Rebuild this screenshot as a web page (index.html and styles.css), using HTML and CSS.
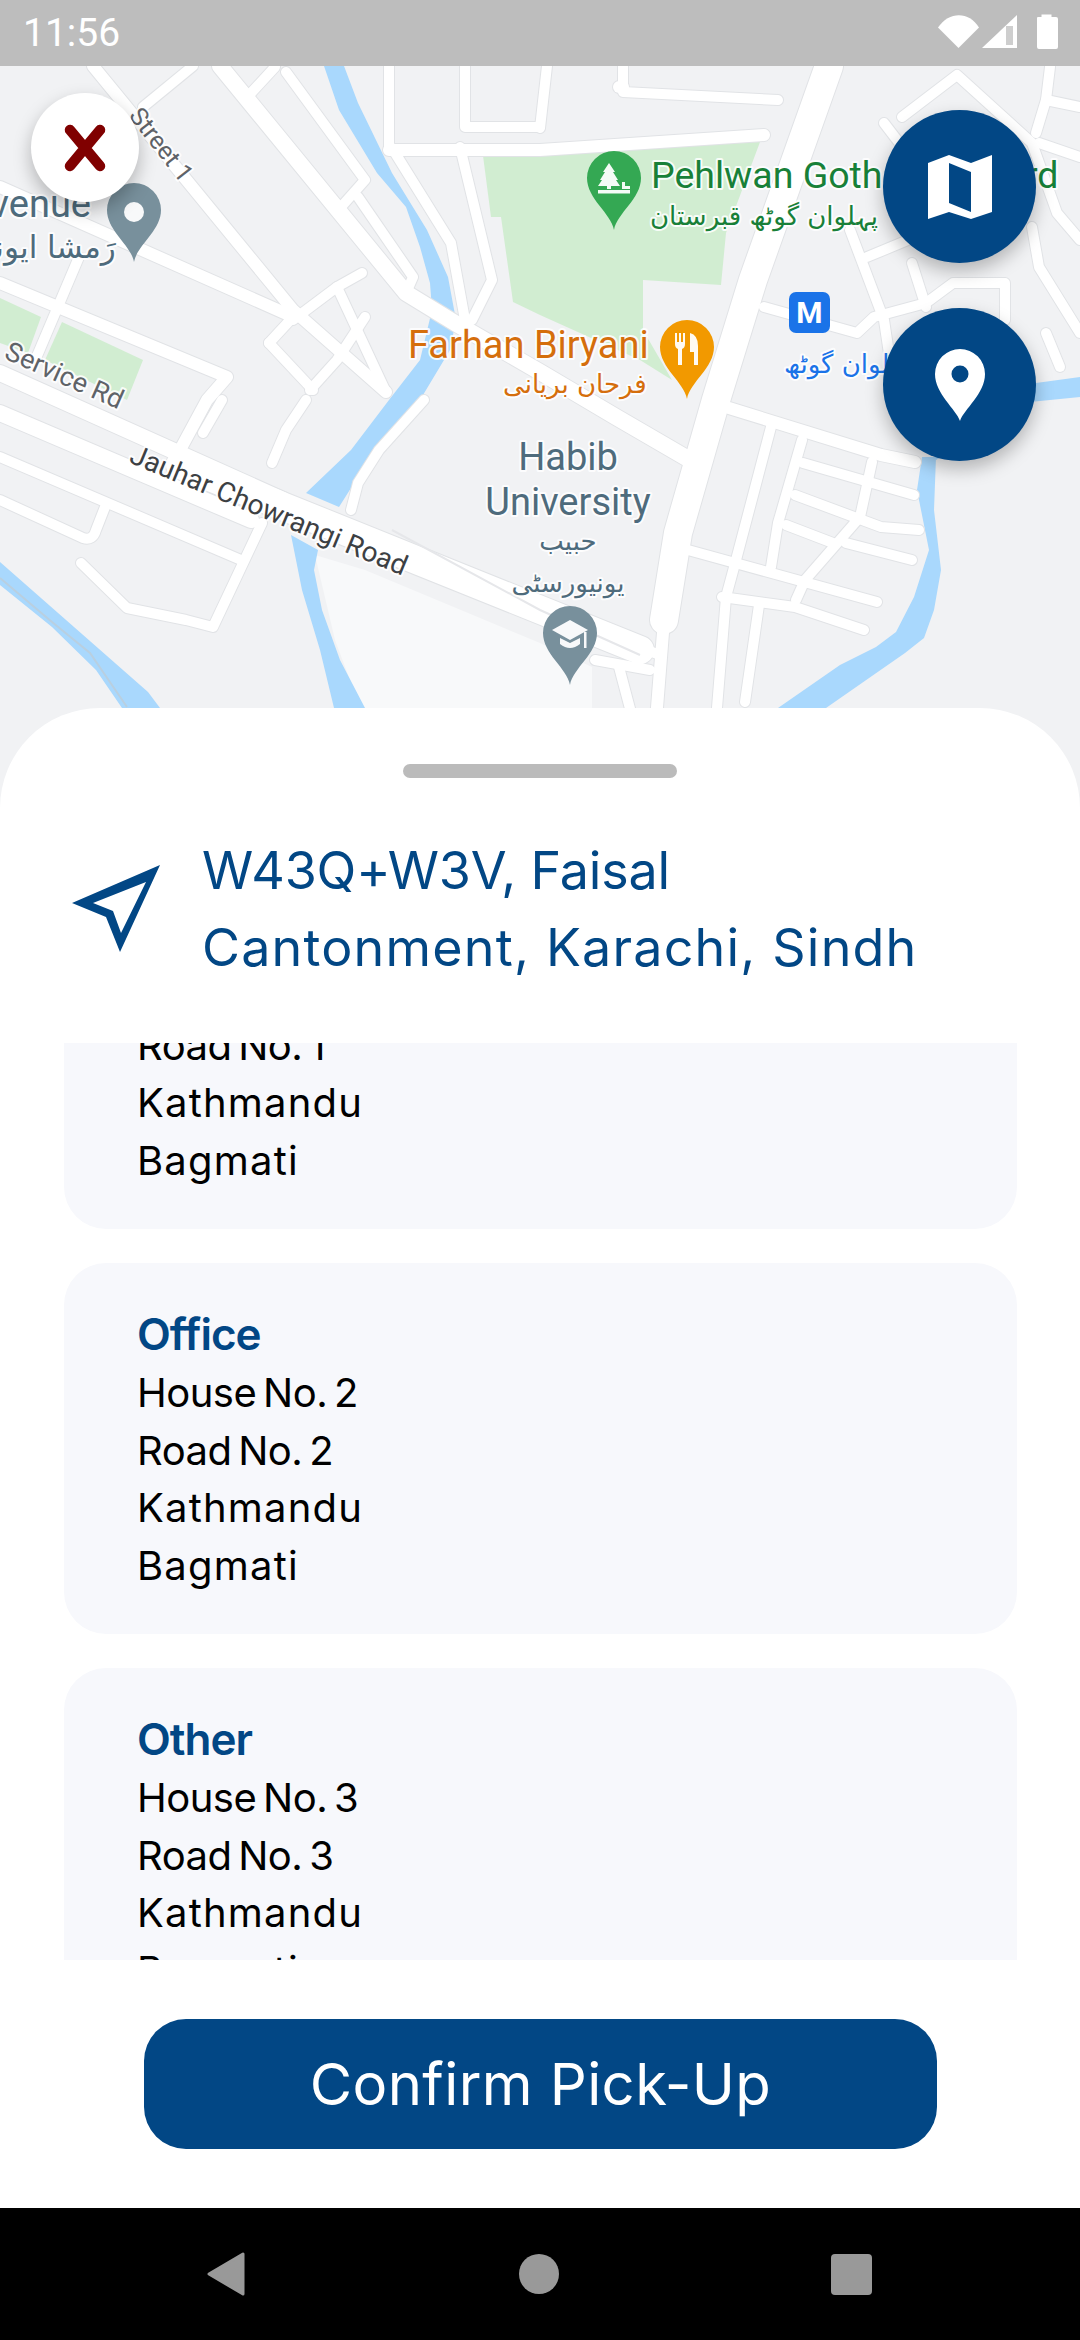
FILE: index.html
```html
<!DOCTYPE html>
<html lang="en">
<head>
<meta charset="utf-8">
<title>Confirm Pick-Up</title>
<link rel="stylesheet" href="styles.css">
</head>
<body>
<div class="screen">
  <header class="status">
    <span class="time">11:56</span>
    <svg class="status-icons" viewBox="0 0 122 36" width="122" height="36">
      <path class="w" d="M0 13.5 C11 -3 31 -3 41 13.5 L20.5 34 Z"/>
      <path class="w" d="M44 34 L79 1 V34 Z"/>
      <path class="s" d="M68 12 H75 V31 H68 Z"/>
      <path class="w" d="M99 4 Q99 3 100 3 H103.500 V0.500 H113.500 V3 H118 Q120 3 120 5 V33 Q120 35 118 35 H101 Q99 35 99 33 Z"/>
    </svg>
  </header>

  <section class="map">
    <svg class="map-canvas" viewBox="0 66 1080 760" width="1080" height="760" aria-label="Map">
      <defs>
        <g id="r-s">
          <path d="M143 107 L193 66"/><path d="M275 67 L251 93"/><path d="M341 207 L365 180 L286 72"/>
          <path d="M358 197 L413 277 L406 293"/><path d="M392 148 L451 243 L465 320"/>
          <path d="M460 147 L492 280 L472 320"/><path d="M389 66 L389 147"/>
          <path d="M465 66 V127 H540"/><path d="M547 66 L540 128"/>
          <path d="M623 66 V92 L778 100"/><path d="M79 257 L34 363"/>
          <path d="M293 320 L337 287 L362 273"/><path d="M337 287 L386 392"/>
          <path d="M365 317 L337 360 L310 390"/><path d="M269 343 L313 390"/><path d="M269 343 L293 317"/>
          <path d="M306 400 L286 430 L272 463"/><path d="M222 400 L203 433"/>
          <path d="M424 400 L379 450 L358 483 L351 510"/>
          <path d="M0 500 L83 538 Q93 541 96 530 L105 507"/><path d="M0 457 L241 560"/>
          <path d="M262 523 L213 627 L186 620 L127 608 L81 563"/>
          <path d="M771 427 L736 560 L726 597 L716 720"/><path d="M802 440 L778 523 L771 567"/>
          <path d="M803 463 L914 495"/><path d="M795 495 L881 527 L919 530"/>
          <path d="M786 525 L833 543"/><path d="M846 543 L912 560"/>
          <path d="M872 462 L860 517 L805 580 L796 600"/><path d="M688 550 L877 602"/>
          <path d="M722 597 L795 607 L864 630"/><path d="M759 605 L745 702"/>
          <path d="M902 117 L957 75 L1032 143 L1057 213 L1080 240"/><path d="M884 123 L920 170"/>
          <path d="M850 230 L884 320 L891 367"/><path d="M867 257 L920 235"/><path d="M912 263 L926 307"/>
          <path d="M764 307 L857 333 L874 317 L926 303 L953 283 H1005 V320"/>
          <path d="M1046 333 L1060 367"/><path d="M1050 67 L1046 100 L1080 107"/><path d="M1036 133 L1046 100"/>
          <path d="M1039 143 L1080 157"/><path d="M1032 227 L1039 267 L1080 333"/>
          <path d="M619 667 L633 720"/><path d="M540 603 L620 640 L660 655"/>
          <path d="M595 660 L650 670"/>
        </g>
        <g id="r-m">
          <path d="M93 66 L293 310 L386 392"/><path d="M0 187 L289 315"/>
          <path d="M0 283 L227 377 L207 400 L180 450"/>
          <path d="M389 150 H540 L764 135"/><path d="M729 408 L881 455 L915 462"/>
          <path d="M619 87 H623"/><path d="M664 620 L656 720"/>
        </g>
        <g id="r-l">
          <path d="M220 66 L406 293 L455 323 L540 372 L616 417 L690 460"/>
          <path d="M0 373 L283 500"/><path d="M0 413 L251 520"/>
        </g>
        <g id="r-xl">
          <path d="M829 66 L753 280 L716 400 L678 533 L664 620"/>
          <path d="M180 465 L640 650"/>
        </g>
        <path id="pin" d="M0 79 C-3 62 -27 48 -27 27 A27 27 0 1 1 27 27 C27 48 3 62 0 79 Z"/>
      </defs>

      <rect class="land" x="0" y="66" width="1080" height="760"/>
      <path class="campus" d="M315 555 L365 570 L540 643 L592 667 V720 H365 L335 640 Z"/>
      <path class="park" d="M482 148 L760 142 L726 233 L721 285 L643 280 V330 L672 380 L640 360 L540 315 L513 302 L501 217 L491 217 Z"/>
      <path class="park" d="M0 298 L41 317 L28 353 L0 343 Z"/>
      <path class="park" d="M62 322 L143 360 L127 400 L45 360 Z"/>

      <path class="water" d="M324 66 L344 66 L358 103 L392 173 L427 230 L448 277 L456 320 L450 350 L420 400 L384 450 L351 488 L339 507 L306 493 L351 450 L389 400 L420 360 L432 310 L430 283 L420 247 L406 207 L377 173 L339 110 Z"/>
      <path class="water" d="M291 535 L318 550 L314 570 L322 610 L340 660 L365 708 L334 708 L320 650 L302 590 Z"/>
      <path class="water" d="M0 562 L148 692 L160 708 L122 708 L96 670 L52 627 L0 585 Z"/>
      <path class="water" d="M922 457 L936 457 L934 510 L941 570 L934 610 L924 638 L905 653 L826 708 L778 708 L840 665 L876 647 L896 632 L914 597 L929 550 L917 490 Z"/>
      <path class="water" d="M930 440 L1036 383 L1080 377 V397 L1030 402 L936 460 Z"/>
      <path class="stream" d="M0 578 L52 622 L90 653 L127 707"/>

      <use href="#r-s" class="case c-s"/><use href="#r-m" class="case c-m"/><use href="#r-l" class="case c-l"/><use href="#r-xl" class="case c-xl"/>
      <use href="#r-s" class="road c-s-in"/><use href="#r-m" class="road c-m-in"/><use href="#r-l" class="road c-l-in"/><use href="#r-xl" class="road c-xl-in"/>
      <path class="median" d="M392 530 L540 610 L640 655"/>

      <text class="lb lb-poi" x="91" y="217" text-anchor="end">Avenue</text>
      <text class="lb lb-poi-ur lb-avenue-ur" x="-30" y="258">رَمشا ایونیو</text>
      <text class="lb lb-road" transform="translate(128 116) rotate(52)">Street 1</text>
      <text class="lb lb-road lb-service" transform="translate(3 358) rotate(24)">Service Rd</text>
      <text class="lb lb-main" transform="translate(128 462) rotate(22.500)">Jauhar Chowrangi Road</text>
      <text class="lb lb-park" x="651" y="188">Pehlwan Goth Graveyard</text>
      <text class="lb lb-park-ur" x="650" y="225">پہلوان گوٹھ قبرستان</text>
      <text class="lb lb-food" x="408" y="358">Farhan Biryani</text>
      <text class="lb lb-food-ur" x="503" y="393">فرحان بریانی</text>
      <text class="lb lb-poi" x="568" y="470" text-anchor="middle">Habib</text>
      <text class="lb lb-poi" x="568" y="515" text-anchor="middle">University</text>
      <text class="lb lb-poi-ur" x="568" y="550" text-anchor="middle">حبیب</text>
      <text class="lb lb-poi-ur" x="568" y="592" text-anchor="middle">یونیورسٹی</text>
      <text class="lb lb-metro-ur" x="784" y="373">پہلوان گوٹھ</text>

      <use href="#pin" class="pin-gray" x="134" y="183"/>
      <circle class="pin-w" cx="134" cy="212" r="10"/>

      <use href="#pin" class="pin-green" x="614" y="151"/>
      <path class="pin-w" d="M609 163 L615 172 H613 L618 180 H616 L620 186 H611 V189 H607 V186 H598 L602 180 H600 L605 172 H603 Z"/>
      <path class="pin-w" d="M622 182 H625 V186 H630 V189 H622 Z"/>
      <rect class="pin-w" x="598" y="190" width="32" height="3.500"/>

      <use href="#pin" class="pin-orange" x="687" y="320"/>
      <path class="pin-w" d="M675 333 H677 V342 H679 V333 H681 V342 H683 V333 H685 V344 Q685 348 682 349 V365 H678 V349 Q675 348 675 344 Z"/>
      <path class="pin-w" d="M690 333 Q698 335 698 346 V365 H694 V352 H690 Z"/>

      <use href="#pin" class="pin-gray" x="570" y="606"/>
      <path class="pin-w" d="M552 630 L570 620 L588 630 L570 640 Z"/>
      <path class="pin-w" d="M560 638 L570 643 L580 638 V644 Q570 652 560 644 Z"/>
      <rect class="pin-w" x="584" y="632" width="2.500" height="16"/>

      <rect class="metro" x="789" y="292" width="41" height="41" rx="7"/>
      <text class="lb-m" x="809.500" y="323" text-anchor="middle">M</text>
    </svg>

    <button class="fab fab-close" aria-label="Close">
      <svg viewBox="0 0 48 52" width="48" height="52"><path class="x" d="M9 8 L39 44 M39 8 L9 44"/></svg>
    </button>
    <button class="fab fab-map" aria-label="Map type">
      <svg viewBox="0 0 64 64" width="64" height="64"><path class="w" fill-rule="evenodd" d="M0 8 L21 0 L43 8 L64 0 V57 L43 64 L21 57 L0 64 Z M21 8 V48 L43 57 V17 Z"/></svg>
    </button>
    <button class="fab fab-pin" aria-label="My location">
      <svg viewBox="0 0 50 72" width="50" height="72"><path class="w" fill-rule="evenodd" d="M25 72 C21 60 0 45 0 25 A25 25 0 1 1 50 25 C50 45 29 60 25 72 Z M25 16.500 A8.500 8.500 0 1 0 25 33.500 A8.500 8.500 0 1 0 25 16.500 Z"/></svg>
    </button>
  </section>

  <section class="sheet">
    <div class="handle"></div>
    <div class="address">
      <svg class="nav-icon" viewBox="0 0 88 87" width="88" height="87"><path class="arrow" d="M88 0 L0 38 L34 52 L48 87 Z M74 17 L21 38 L41 46 L49 68 Z" fill-rule="evenodd"/></svg>
      <p class="address-text"><span class="address-first">W43Q+W3V, Faisal</span><br>Cantonment, Karachi, Sindh</p>
    </div>
    <div class="list">
      <div class="list-inner">
        <article class="card">
          <h3 class="card-title">Home</h3>
          <p class="card-line tight">House No. 1</p>
          <p class="card-line tight">Road No. 1</p>
          <p class="card-line">Kathmandu</p>
          <p class="card-line">Bagmati</p>
        </article>
        <article class="card">
          <h3 class="card-title">Office</h3>
          <p class="card-line tight">House No. 2</p>
          <p class="card-line tight">Road No. 2</p>
          <p class="card-line">Kathmandu</p>
          <p class="card-line">Bagmati</p>
        </article>
        <article class="card">
          <h3 class="card-title">Other</h3>
          <p class="card-line tight">House No. 3</p>
          <p class="card-line tight">Road No. 3</p>
          <p class="card-line">Kathmandu</p>
          <p class="card-line">Bagmati</p>
        </article>
      </div>
    </div>
    <div class="actions">
      <button class="confirm">Confirm Pick-Up</button>
    </div>
  </section>

  <nav class="navbar">
    <svg class="nav-back" viewBox="0 0 38 44" width="38" height="44"><path class="nav-b" d="M36 2 V42 L2 22 Z"/></svg>
    <span class="nav-home"></span>
    <span class="nav-recent"></span>
  </nav>
</div>
</body>
</html>
```
FILE: styles.css
```css
* { box-sizing: border-box; margin: 0; padding: 0; }
html, body { width: 1080px; height: 2340px; overflow: hidden; background: #fff; }
body { font-family: Inter, "Liberation Sans", sans-serif; }
.screen { width: 1080px; height: 2340px; display: flex; flex-direction: column; overflow: hidden; }

/* status bar */
.status { height: 66px; flex: none; background: #bdbdbd; display: flex; align-items: center; justify-content: space-between; padding: 0 20px 0 23px; position: relative; z-index: 3; }
.time { font-family: Roboto, sans-serif; font-size: 39px; color: #fff; line-height: 68px; }
.status-icons { margin-top: -2px; }
.w { fill: #fff; }
.s { fill: #bdbdbd; opacity: .75; }

/* map */
.map { position: relative; height: 760px; flex: none; }
.map-canvas { display: block; }
.land { fill: #f1f2f4; }
.campus { fill: #f8f9fa; }
.park { fill: #d1edd1; }
.water { fill: #a9d8fd; }
.stream { fill: none; stroke: #b9cfe0; stroke-width: 2; }
.case, .road { fill: none; stroke-linecap: round; stroke-linejoin: round; }
.case { stroke: #e1e3e6; }
.road { stroke: #fff; }
.c-s { stroke-width: 12; } .c-s-in { stroke-width: 10; }
.c-m { stroke-width: 14; } .c-m-in { stroke-width: 12; }
.c-l { stroke-width: 18; } .c-l-in { stroke-width: 16; }
.c-xl { stroke-width: 30; } .c-xl-in { stroke-width: 28; }
.median { fill: none; stroke: #e6e7ea; stroke-width: 2; }

.lb { font-family: Roboto, "DejaVu Sans", sans-serif; paint-order: stroke; stroke: #fff; stroke-opacity: .85; stroke-width: 4px; stroke-linejoin: round; }
.lb-poi { font-size: 38px; fill: #4e6b7c; }
.lb-poi-ur { font-size: 26px; fill: #4e6b7c; font-family: "DejaVu Sans", sans-serif; }
.lb-avenue-ur { font-size: 31px; }
.lb-road { font-size: 25px; fill: #5f6368; }
.lb-service { font-size: 27px; }
.lb-main { font-size: 28px; fill: #3c4043; }
.lb-park { font-size: 37.500px; fill: #188038; }
.lb-park-ur { font-size: 26px; fill: #188038; font-family: "DejaVu Sans", sans-serif; }
.lb-food { font-size: 38px; fill: #d56e0c; }
.lb-food-ur { font-size: 26px; fill: #d56e0c; font-family: "DejaVu Sans", sans-serif; }
.lb-metro-ur { font-size: 26px; fill: #1a73e8; font-family: "DejaVu Sans", sans-serif; }
.lb-m { font-family: Roboto, sans-serif; font-weight: 700; font-size: 30px; fill: #fff; }
.metro { fill: #1a73e8; }
.pin-gray { fill: #78909c; }
.pin-green { fill: #34a853; }
.pin-orange { fill: #f29900; }
.pin-w { fill: #fff; opacity: .95; }

/* floating buttons */
.fab { position: absolute; border: 0; border-radius: 50%; display: flex; align-items: center; justify-content: center; box-shadow: 0 8px 18px rgba(0,0,0,.26); }
.fab-close { left: 31px; top: 27px; width: 108px; height: 109px; background: #fff; }
.fab-map { left: 883px; top: 44px; width: 153px; height: 153px; background: #024785; }
.fab-pin { left: 883px; top: 242px; width: 153px; height: 153px; background: #024785; }
.x { fill: none; stroke: #800000; stroke-width: 10.500; stroke-linecap: round; }

/* bottom sheet */
.sheet { position: relative; z-index: 2; flex: none; height: 1500px; margin-top: -118px; background: #fff; border-radius: 100px 100px 0 0; display: flex; flex-direction: column; align-items: stretch; }
.handle { align-self: center; width: 274px; height: 14px; margin-top: 56px; background: #bbb; border-radius: 7px; flex: none; }
.address { height: 265px; flex: none; display: flex; align-items: flex-start; padding: 72px 0 0 72px; gap: 42px; }
.nav-icon { flex: none; margin-top: 15px; }
.arrow { fill: #024785; }
.address-text { font-size: 52px; line-height: 77px; color: #024785; white-space: nowrap; letter-spacing: 1.200px; margin-top: -18px; }
.address-first { letter-spacing: -.2px; }

.list { height: 917px; flex: none; overflow: hidden; }
.list-inner { margin-top: -185px; display: flex; flex-direction: column; gap: 34px; padding: 0 63px 0 64px; }
.card { height: 371px; flex: none; background: #f7f8fc; border-radius: 42px; padding: 41px 0 0 73px; }
.card-title { font-size: 44px; line-height: 60px; font-weight: 600; color: #024785; letter-spacing: -1px; }
.card-line { font-size: 40px; line-height: 57.700px; color: #000; letter-spacing: 1.200px; }
.tight { letter-spacing: -.5px; word-spacing: -4px; }

.actions { flex: 1; padding: 59px 143px 0 144px; }
.confirm { width: 100%; height: 130px; border: 0; border-radius: 42px; background: #024785; color: #fff; font-family: inherit; font-size: 58px; display: block; letter-spacing: .4px; }

/* nav bar */
.navbar { flex: none; height: 132px; background: #000; position: relative; z-index: 3; display: grid; grid-template-columns: 1fr 1fr 1fr; align-items: center; padding: 0 208px 0 207px; margin-top: auto; }
.nav-back { justify-self: start; }
.nav-b { fill: #999; stroke: #999; stroke-width: 3; stroke-linejoin: round; }
.nav-home { justify-self: center; width: 40px; height: 40px; border-radius: 50%; background: #999; }
.nav-recent { justify-self: end; width: 41px; height: 41px; border-radius: 4px; background: #999; }
```
